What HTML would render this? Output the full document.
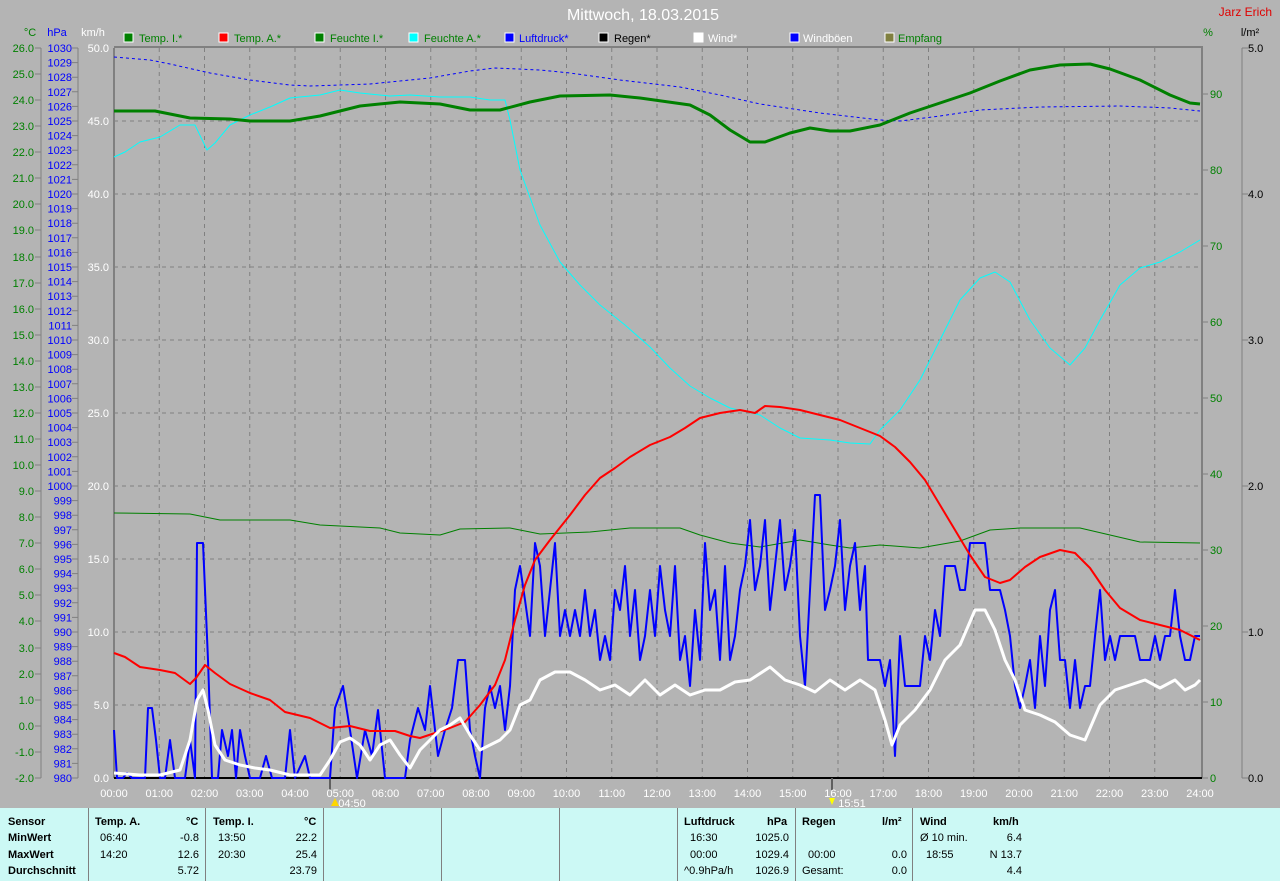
<!DOCTYPE html>
<html><head><meta charset="utf-8"><style>
body{margin:0;background:#b4b4b4;width:1280px;height:881px;overflow:hidden;font-family:"Liberation Sans",sans-serif}
svg{position:absolute;left:0;top:0}
.p{position:absolute;top:808px;height:73px;background:#ccf9f5;left:0;width:1280px}
.d{position:absolute;top:808px;height:73px;width:1px;background:#808080}
.t{position:absolute;font:bold 11px "Liberation Sans",sans-serif;color:#000;white-space:pre}
.n{position:absolute;font:11px "Liberation Sans",sans-serif;color:#000;white-space:pre}
</style></head><body>
<svg width="1280" height="808" xmlns="http://www.w3.org/2000/svg" font-family="Liberation Sans, sans-serif">
<g stroke="#808080" stroke-dasharray="4,4" stroke-width="1">
<path d="M159.25 48V778M204.5 48V778M249.75 48V778M295 48V778M340.25 48V778M385.5 48V778M430.75 48V778M476 48V778M521.25 48V778M566.5 48V778M611.75 48V778M657 48V778M702.25 48V778M747.5 48V778M792.75 48V778M838 48V778M883.25 48V778M928.5 48V778M973.75 48V778M1019 48V778M1064.25 48V778M1109.5 48V778M1154.75 48V778"/>
<path d="M114 121H1201M114 194H1201M114 267H1201M114 340H1201M114 413H1201M114 486H1201M114 559H1201M114 632H1201M114 705H1201"/>
</g>
<path d="M114 48V778M1202 48V778M114 47H1203" stroke="#808080" stroke-width="2" fill="none"/>
<path d="M114 778H1202" stroke="#000" stroke-width="2"/>
<path d="M330 778V790M832 778V790" stroke="#606060" stroke-width="2"/>
<g stroke="#808080" stroke-width="1" fill="none">
<path d="M41 48V778M78 48V778M1242 48V778"/>
<path d="M35 48H41M35 74H41M35 100H41M35 126H41M35 152H41M35 178H41M35 204H41M35 230H41M35 257H41M35 283H41M35 309H41M35 335H41M35 361H41M35 387H41M35 413H41M35 439H41M35 465H41M35 491H41M35 517H41M35 543H41M35 569H41M35 595H41M35 621H41M35 648H41M35 674H41M35 700H41M35 726H41M35 752H41M35 778H41"/>
<path d="M1202 94H1208M1202 170H1208M1202 246H1208M1202 322H1208M1202 398H1208M1202 474H1208M1202 550H1208M1202 626H1208M1202 702H1208M1202 778H1208"/>
<path d="M1242 48H1248M1242 194H1248M1242 340H1248M1242 486H1248M1242 632H1248M1242 778H1248"/>
</g>
<text x="643" y="20" fill="#fff" font-size="16" text-anchor="middle">Mittwoch, 18.03.2015</text>
<text x="1272" y="16" fill="#e00000" font-size="12" text-anchor="end">Jarz Erich</text>
<g font-size="11">
<text x="30" y="36" fill="#008000" text-anchor="middle">°C</text>
<text x="57" y="36" fill="#0000ff" text-anchor="middle">hPa</text>
<text x="93" y="36" fill="#fff" text-anchor="middle">km/h</text>
<text x="1208" y="36" fill="#008000" text-anchor="middle">%</text>
<text x="1250" y="36" fill="#000" text-anchor="middle">l/m²</text>
</g>
<g font-size="11">
<rect x="124" y="33" width="9" height="9" fill="#008000" stroke="#fff"/><text x="139" y="42" fill="#008000">Temp. I.*</text>
<rect x="219" y="33" width="9" height="9" fill="#ff0000" stroke="#fff"/><text x="234" y="42" fill="#008000">Temp. A.*</text>
<rect x="315" y="33" width="9" height="9" fill="#008000" stroke="#fff"/><text x="330" y="42" fill="#008000">Feuchte I.*</text>
<rect x="409" y="33" width="9" height="9" fill="#00ffff" stroke="#fff"/><text x="424" y="42" fill="#008000">Feuchte A.*</text>
<rect x="505" y="33" width="9" height="9" fill="#0000ff" stroke="#fff"/><text x="519" y="42" fill="#0000ff">Luftdruck*</text>
<rect x="599" y="33" width="9" height="9" fill="#000" stroke="#fff"/><text x="614" y="42" fill="#000">Regen*</text>
<rect x="694" y="33" width="9" height="9" fill="#fff" stroke="#fff"/><text x="708" y="42" fill="#fff">Wind*</text>
<rect x="790" y="33" width="9" height="9" fill="#0000ff" stroke="#fff"/><text x="803" y="42" fill="#fff">Windböen</text>
<rect x="885" y="33" width="9" height="9" fill="#808040" stroke="#fff"/><text x="898" y="42" fill="#008000">Empfang</text>
</g>
<g font-size="11" fill="#008000" text-anchor="end">
<text x="34" y="52">26.0</text><text x="34" y="78">25.0</text><text x="34" y="104">24.0</text><text x="34" y="130">23.0</text><text x="34" y="156">22.0</text><text x="34" y="182">21.0</text><text x="34" y="208">20.0</text><text x="34" y="234">19.0</text><text x="34" y="261">18.0</text><text x="34" y="287">17.0</text><text x="34" y="313">16.0</text><text x="34" y="339">15.0</text><text x="34" y="365">14.0</text><text x="34" y="391">13.0</text><text x="34" y="417">12.0</text><text x="34" y="443">11.0</text><text x="34" y="469">10.0</text><text x="34" y="495">9.0</text><text x="34" y="521">8.0</text><text x="34" y="547">7.0</text><text x="34" y="573">6.0</text><text x="34" y="599">5.0</text><text x="34" y="625">4.0</text><text x="34" y="652">3.0</text><text x="34" y="678">2.0</text><text x="34" y="704">1.0</text><text x="34" y="730">0.0</text><text x="34" y="756">-1.0</text><text x="34" y="782">-2.0</text>
</g>
<g font-size="11" fill="#0000ff" text-anchor="end">
<text x="72" y="52">1030</text><text x="72" y="66.6">1029</text><text x="72" y="81.2">1028</text><text x="72" y="95.8">1027</text><text x="72" y="110.4">1026</text><text x="72" y="125">1025</text><text x="72" y="139.6">1024</text><text x="72" y="154.2">1023</text><text x="72" y="168.8">1022</text><text x="72" y="183.4">1021</text><text x="72" y="198">1020</text><text x="72" y="212.6">1019</text><text x="72" y="227.2">1018</text><text x="72" y="241.8">1017</text><text x="72" y="256.4">1016</text><text x="72" y="271">1015</text><text x="72" y="285.6">1014</text><text x="72" y="300.2">1013</text><text x="72" y="314.8">1012</text><text x="72" y="329.4">1011</text><text x="72" y="344">1010</text><text x="72" y="358.6">1009</text><text x="72" y="373.2">1008</text><text x="72" y="387.8">1007</text><text x="72" y="402.4">1006</text><text x="72" y="417">1005</text><text x="72" y="431.6">1004</text><text x="72" y="446.2">1003</text><text x="72" y="460.8">1002</text><text x="72" y="475.4">1001</text><text x="72" y="490">1000</text><text x="72" y="504.6">999</text><text x="72" y="519.2">998</text><text x="72" y="533.8">997</text><text x="72" y="548.4">996</text><text x="72" y="563">995</text><text x="72" y="577.6">994</text><text x="72" y="592.2">993</text><text x="72" y="606.8">992</text><text x="72" y="621.4">991</text><text x="72" y="636">990</text><text x="72" y="650.6">989</text><text x="72" y="665.2">988</text><text x="72" y="679.8">987</text><text x="72" y="694.4">986</text><text x="72" y="709">985</text><text x="72" y="723.6">984</text><text x="72" y="738.2">983</text><text x="72" y="752.8">982</text><text x="72" y="767.4">981</text><text x="72" y="782">980</text>
</g>
<g stroke="#808080"><path d="M72 48H78M72 62.6H78M72 77.2H78M72 91.8H78M72 106.4H78M72 121H78M72 135.6H78M72 150.2H78M72 164.8H78M72 179.4H78M72 194H78M72 208.6H78M72 223.2H78M72 237.8H78M72 252.4H78M72 267H78M72 281.6H78M72 296.2H78M72 310.8H78M72 325.4H78M72 340H78M72 354.6H78M72 369.2H78M72 383.8H78M72 398.4H78M72 413H78M72 427.6H78M72 442.2H78M72 456.8H78M72 471.4H78M72 486H78M72 500.6H78M72 515.2H78M72 529.8H78M72 544.4H78M72 559H78M72 573.6H78M72 588.2H78M72 602.8H78M72 617.4H78M72 632H78M72 646.6H78M72 661.2H78M72 675.8H78M72 690.4H78M72 705H78M72 719.6H78M72 734.2H78M72 748.8H78M72 763.4H78M72 778H78"/></g>
<g font-size="11" fill="#fff" text-anchor="end">
<text x="109" y="52">50.0</text><text x="109" y="125">45.0</text><text x="109" y="198">40.0</text><text x="109" y="271">35.0</text><text x="109" y="344">30.0</text><text x="109" y="417">25.0</text><text x="109" y="490">20.0</text><text x="109" y="563">15.0</text><text x="109" y="636">10.0</text><text x="109" y="709">5.0</text><text x="109" y="782">0.0</text>
</g>
<g font-size="11" fill="#008000">
<text x="1210" y="98">90</text><text x="1210" y="174">80</text><text x="1210" y="250">70</text><text x="1210" y="326">60</text><text x="1210" y="402">50</text><text x="1210" y="478">40</text><text x="1210" y="554">30</text><text x="1210" y="630">20</text><text x="1210" y="706">10</text><text x="1210" y="782">0</text>
</g>
<g font-size="11" fill="#000">
<text x="1248" y="52">5.0</text><text x="1248" y="198">4.0</text><text x="1248" y="344">3.0</text><text x="1248" y="490">2.0</text><text x="1248" y="636">1.0</text><text x="1248" y="782">0.0</text>
</g>
<g font-size="11" fill="#fff" text-anchor="middle">
<text x="114" y="797">00:00</text><text x="159.25" y="797">01:00</text><text x="204.5" y="797">02:00</text><text x="249.75" y="797">03:00</text><text x="295" y="797">04:00</text><text x="340.25" y="797">05:00</text><text x="385.5" y="797">06:00</text><text x="430.75" y="797">07:00</text><text x="476" y="797">08:00</text><text x="521.25" y="797">09:00</text><text x="566.5" y="797">10:00</text><text x="611.75" y="797">11:00</text><text x="657" y="797">12:00</text><text x="702.25" y="797">13:00</text><text x="747.5" y="797">14:00</text><text x="792.75" y="797">15:00</text><text x="838" y="797">16:00</text><text x="883.25" y="797">17:00</text><text x="928.5" y="797">18:00</text><text x="973.75" y="797">19:00</text><text x="1019" y="797">20:00</text><text x="1064.25" y="797">21:00</text><text x="1109.5" y="797">22:00</text><text x="1154.75" y="797">23:00</text><text x="1200" y="797">24:00</text>
<text x="352" y="807">04:50</text><text x="852" y="807">15:51</text>
</g>
<path d="M331 806l4-8 4 8z" fill="#ffd800"/><path d="M829 798h6l-3 7z" fill="#ffff00"/>
<g fill="none" stroke-linejoin="round">
<polyline stroke="#0000ff" stroke-dasharray="3,3" stroke-width="1" points="114,57 150,60 170,64 210,73 250,80 290,85 310,86 370,84 430,78 470,71 495,68 540,70 570,73 620,80 680,87 720,95 760,104 820,113 880,120 900,121 940,116 980,110 1040,107 1120,106 1170,108 1200,111"/>
<polyline stroke="#00ffff" stroke-width="1" points="114,157 125,152 140,142 160,137 180,125 195,125 207,150 215,143 230,125 250,115 270,107 290,98 320,95 340,90 360,93 390,96 410,95 440,97 470,97 490,100 505,100 510,120 520,170 540,225 560,262 580,285 600,305 625,325 650,347 670,368 690,386 710,398 730,408 760,415 780,428 800,438 830,440 850,443 870,444 880,430 900,410 920,380 940,340 960,300 980,278 995,272 1010,282 1030,320 1050,348 1070,365 1085,348 1100,320 1120,285 1140,268 1160,262 1180,252 1200,240"/>
<polyline stroke="#008000" stroke-width="3" points="114,111 155,111 190,118 230,119 250,121 290,121 320,116 360,106 400,102 440,104 470,110 500,110 530,102 560,96 610,95 640,98 690,105 710,115 730,130 750,142 765,142 790,133 810,128 830,131 850,131 880,125 910,113 940,103 970,93 1000,81 1030,70 1060,65 1090,64 1110,69 1140,80 1170,95 1190,103 1200,104"/>
<polyline stroke="#008000" stroke-width="1" points="114,513 190,514 220,520 290,520 320,525 380,528 400,533 440,535 460,529 510,528 540,534 590,532 630,528 680,528 700,535 730,543 760,547 800,540 830,545 850,548 880,545 920,548 960,541 990,530 1020,528 1080,528 1110,535 1140,542 1200,543"/>
<polyline stroke="#0000ff" stroke-width="2" points="114,730 117,778 123,778 127,773 132,778 145,778 148,708 152,708 156,740 160,778 165,778 170,740 175,778 185,778 190,740 195,778 197,543 203,543 208,660 212,778 218,778 222,730 228,756 232,730 236,778 240,730 245,756 250,778 260,778 266,756 272,778 285,778 290,730 295,778 305,756 310,778 330,778 335,708 343,686 350,730 357,778 365,730 372,756 378,710 385,778 405,778 410,740 418,708 425,730 430,686 438,756 445,730 452,708 458,660 465,660 470,730 475,756 480,778 485,708 490,686 495,708 500,686 505,730 510,686 515,590 520,566 525,600 530,636 535,543 540,566 545,636 550,590 555,543 560,636 565,610 570,636 575,610 580,636 585,590 590,636 595,610 600,660 605,636 610,660 615,590 620,610 625,566 630,636 635,590 640,660 645,636 650,590 655,636 660,566 665,610 670,636 675,566 680,660 685,636 690,686 695,610 700,660 705,543 710,610 715,590 720,660 725,566 730,660 735,636 740,590 745,566 750,520 755,590 760,566 765,520 770,610 775,566 780,520 785,590 790,566 795,530 800,636 805,686 810,590 815,495 820,495 825,610 830,590 835,566 840,520 845,610 850,566 855,543 860,610 865,566 868,660 880,660 885,686 890,660 895,756 900,636 905,686 920,686 925,636 930,660 935,610 940,636 945,566 955,566 960,590 965,590 970,543 985,543 990,590 1000,590 1005,610 1010,636 1015,686 1020,708 1025,686 1030,660 1035,708 1040,636 1045,686 1050,610 1055,590 1060,660 1065,660 1070,708 1075,660 1080,708 1085,686 1090,686 1095,636 1100,590 1105,660 1110,636 1115,660 1120,636 1135,636 1140,660 1150,660 1155,636 1160,660 1165,636 1170,636 1175,590 1180,636 1185,660 1190,660 1195,636 1200,636"/>
<polyline stroke="#ff0000" stroke-width="2" points="114,653 125,657 140,667 160,670 175,673 190,684 196,678 205,665 215,673 230,684 250,693 270,700 285,712 310,718 330,728 350,726 370,731 395,731 410,736 420,738 435,733 450,728 465,722 480,705 495,685 505,660 515,620 525,585 535,560 550,540 570,515 585,495 600,478 615,468 630,457 650,445 670,437 685,428 700,418 720,413 740,410 755,413 765,406 780,407 800,410 820,415 840,420 860,428 880,436 895,447 910,462 925,480 940,505 955,530 970,555 985,577 1000,583 1010,580 1025,567 1040,557 1060,550 1075,553 1090,568 1105,590 1120,608 1140,620 1160,625 1180,630 1200,640"/>
<polyline stroke="#fff" stroke-width="3" points="114,773 140,775 160,775 180,770 190,740 197,700 203,690 208,710 215,745 225,760 240,765 255,768 270,770 290,775 320,775 330,760 340,742 350,738 360,745 370,760 380,745 390,740 400,755 410,768 420,750 430,740 440,730 450,725 460,718 470,735 480,750 490,745 500,740 510,730 520,705 530,700 540,680 555,672 570,672 585,680 600,690 615,685 630,695 645,680 660,695 675,685 690,695 705,690 720,690 735,682 750,680 770,667 785,680 800,685 815,692 830,680 845,690 860,680 875,690 885,720 892,745 900,725 915,710 930,690 945,660 960,645 975,610 985,610 995,630 1005,660 1015,680 1025,710 1040,715 1055,722 1070,735 1085,740 1100,705 1115,690 1130,685 1145,680 1160,688 1175,680 1185,690 1195,685 1200,680"/>
</g>
</svg>
<div class="p"></div>
<div class="d" style="left:88px"></div><div class="d" style="left:205px"></div><div class="d" style="left:323px"></div><div class="d" style="left:441px"></div><div class="d" style="left:559px"></div><div class="d" style="left:677px"></div><div class="d" style="left:795px"></div><div class="d" style="left:912px"></div>
<div class="t" style="left:8px;top:816px">Sensor</div>
<div class="t" style="left:8px;top:832px">MinWert</div>
<div class="t" style="left:8px;top:849px">MaxWert</div>
<div class="t" style="left:8px;top:865px">Durchschnitt</div>
<div class="t" style="left:95px;top:816px">Temp. A.</div><div class="t" style="left:186px;top:816px">°C</div>
<div class="n" style="left:100px;top:832px">06:40</div><div class="n" style="left:170px;top:832px;width:29px;text-align:right">-0.8</div>
<div class="n" style="left:100px;top:849px">14:20</div><div class="n" style="left:170px;top:849px;width:29px;text-align:right">12.6</div>
<div class="n" style="left:170px;top:865px;width:29px;text-align:right">5.72</div>
<div class="t" style="left:213px;top:816px">Temp. I.</div><div class="t" style="left:304px;top:816px">°C</div>
<div class="n" style="left:218px;top:832px">13:50</div><div class="n" style="left:280px;top:832px;width:37px;text-align:right">22.2</div>
<div class="n" style="left:218px;top:849px">20:30</div><div class="n" style="left:280px;top:849px;width:37px;text-align:right">25.4</div>
<div class="n" style="left:280px;top:865px;width:37px;text-align:right">23.79</div>
<div class="t" style="left:684px;top:816px">Luftdruck</div><div class="t" style="left:767px;top:816px">hPa</div>
<div class="n" style="left:690px;top:832px">16:30</div><div class="n" style="left:740px;top:832px;width:49px;text-align:right">1025.0</div>
<div class="n" style="left:690px;top:849px">00:00</div><div class="n" style="left:740px;top:849px;width:49px;text-align:right">1029.4</div>
<div class="n" style="left:684px;top:865px">^0.9hPa/h</div><div class="n" style="left:740px;top:865px;width:49px;text-align:right">1026.9</div>
<div class="t" style="left:802px;top:816px">Regen</div><div class="t" style="left:882px;top:816px">l/m²</div>
<div class="n" style="left:808px;top:849px">00:00</div><div class="n" style="left:870px;top:849px;width:37px;text-align:right">0.0</div>
<div class="n" style="left:802px;top:865px">Gesamt:</div><div class="n" style="left:870px;top:865px;width:37px;text-align:right">0.0</div>
<div class="t" style="left:920px;top:816px">Wind</div><div class="t" style="left:993px;top:816px">km/h</div>
<div class="n" style="left:920px;top:832px">Ø 10 min.</div><div class="n" style="left:980px;top:832px;width:42px;text-align:right">6.4</div>
<div class="n" style="left:926px;top:849px">18:55</div><div class="n" style="left:980px;top:849px;width:42px;text-align:right">N 13.7</div>
<div class="n" style="left:980px;top:865px;width:42px;text-align:right">4.4</div>
</body></html>
